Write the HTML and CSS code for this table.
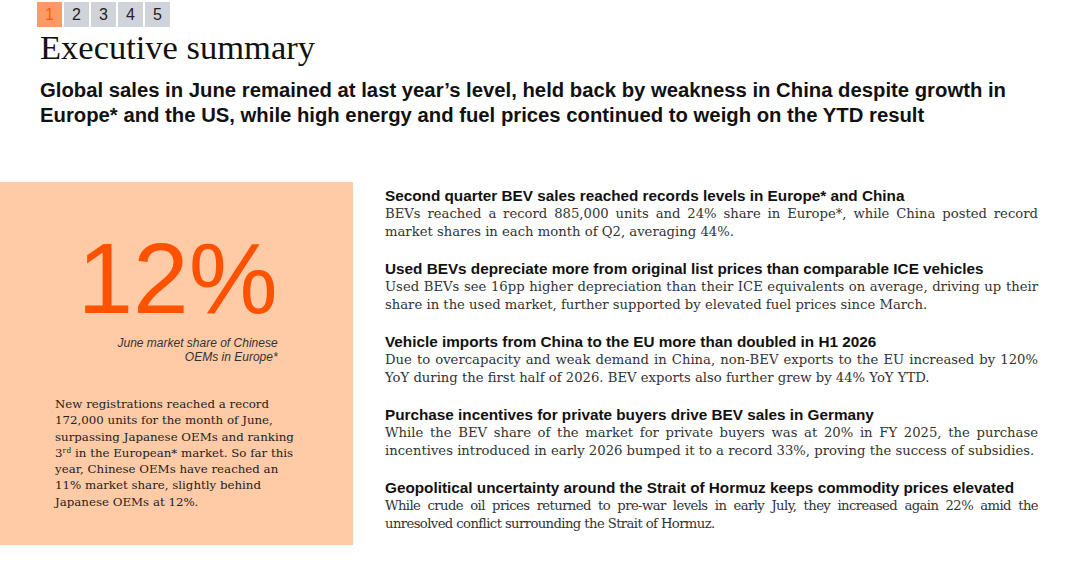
FILE: index.html
```html
<!DOCTYPE html>
<html lang="en">
<head>
<meta charset="utf-8">
<title>Executive summary</title>
<link rel="stylesheet" href="styles.css">
</head>
<body>
<header class="header">
  <nav class="pager">
    <span class="page active">1</span>
    <span class="page">2</span>
    <span class="page">3</span>
    <span class="page">4</span>
    <span class="page">5</span>
  </nav>
  <h1 class="title">Executive summary</h1>
  <p class="subtitle">Global sales in June remained at last year’s level, held back by weakness in China despite growth in Europe* and the US, while high energy and fuel prices continued to weigh on the YTD result</p>
</header>
<main class="main">
  <aside class="kpi">
    <div class="kpi-figure">
      <div class="kpi-number">12%</div>
      <div class="kpi-caption">June market share of Chinese<br>OEMs in Europe*</div>
    </div>
    <p class="kpi-text">New registrations reached a record 172,000 units for the month of June, surpassing Japanese OEMs and ranking 3ʳᵈ in the European* market. So far this year, Chinese OEMs have reached an 11% market share, slightly behind Japanese OEMs at 12%.</p>
  </aside>
  <section class="points">
    <article class="point">
      <h2 class="point-title">Second quarter BEV sales reached records levels in Europe* and China</h2>
      <p class="point-text">BEVs reached a record 885,000 units and 24% share in Europe*, while China posted record market shares in each month of Q2, averaging 44%.</p>
    </article>
    <article class="point">
      <h2 class="point-title">Used BEVs depreciate more from original list prices than comparable ICE vehicles</h2>
      <p class="point-text">Used BEVs see 16pp higher depreciation than their ICE equivalents on average, driving up their share in the used market, further supported by elevated fuel prices since March.</p>
    </article>
    <article class="point">
      <h2 class="point-title">Vehicle imports from China to the EU more than doubled in H1 2026</h2>
      <p class="point-text">Due to overcapacity and weak demand in China, non-BEV exports to the EU increased by 120% YoY during the first half of 2026. BEV exports also further grew by 44% YoY YTD.</p>
    </article>
    <article class="point">
      <h2 class="point-title">Purchase incentives for private buyers drive BEV sales in Germany</h2>
      <p class="point-text">While the BEV share of the market for private buyers was at 20% in FY 2025, the purchase incentives introduced in early 2026 bumped it to a record 33%, proving the success of subsidies.</p>
    </article>
    <article class="point">
      <h2 class="point-title">Geopolitical uncertainty around the Strait of Hormuz keeps commodity prices elevated</h2>
      <p class="point-text condensed">While crude oil prices returned to pre-war levels in early July, they increased again 22% amid the unresolved conflict surrounding the Strait of Hormuz.</p>
    </article>
  </section>
</main>
</body>
</html>
```
FILE: styles.css
```css
html, body {
  margin: 0;
  padding: 0;
  background: #ffffff;
}
body {
  width: 1080px;
  height: 561px;
  overflow: hidden;
  font-family: "Liberation Sans", Arial, sans-serif;
  color: #111;
}
.header {
  padding: 2px 0 0 37px;
}
.pager {
  display: flex;
  gap: 2px;
}
.page {
  width: 25px;
  height: 25px;
  display: flex;
  align-items: center;
  justify-content: center;
  background: #d0d4da;
  color: #222;
  font-size: 16px;
  line-height: 1;
}
.page.active {
  background: #ff9a66;
  color: #ff5a10;
}
.title {
  margin: 2px 0 0 3px;
  font-family: "Liberation Serif", "Times New Roman", serif;
  font-weight: normal;
  font-size: 34.5px;
  line-height: 36px;
  color: #111;
}
.subtitle {
  margin: 13px 0 0 3px;
  font-weight: bold;
  font-size: 20.3px;
  line-height: 25px;
  color: #111;
  width: 1000px;
}
.main {
  display: flex;
  margin-top: 54px;
  align-items: flex-start;
}
.kpi {
  width: 353px;
  height: 363px;
  box-sizing: border-box;
  background: #ffcba6;
  padding-top: 46px;
  display: flex;
  flex-direction: column;
  align-items: center;
}
.kpi-figure {
  display: flex;
  flex-direction: column;
  margin-left: 2px;
}
.kpi-number {
  font-size: 100px;
  line-height: 100px;
  color: #ff5200;
}
.kpi-caption {
  margin-top: 8px;
  text-align: right;
  font-style: italic;
  font-size: 12px;
  line-height: 14px;
  color: #333;
}
.kpi-text {
  align-self: flex-start;
  margin: 32px 0 0 55px;
  width: 250px;
  font-family: "DejaVu Serif", Georgia, serif;
  font-size: 11.8px;
  line-height: 16.3px;
  color: #222;
}
.points {
  margin: 5px 0 0 32px;
  width: 653px;
  display: flex;
  flex-direction: column;
  gap: 19px;
}
.point-title {
  margin: 0;
  font-size: 15.3px;
  font-weight: bold;
  line-height: 18px;
  color: #111;
}
.point-text {
  margin: 0;
  font-family: "DejaVu Serif", Georgia, serif;
  font-size: 13.2px;
  line-height: 18px;
  text-align: justify;
  color: #333;
}
.point-text.condensed {
  letter-spacing: -0.6px;
}
```
